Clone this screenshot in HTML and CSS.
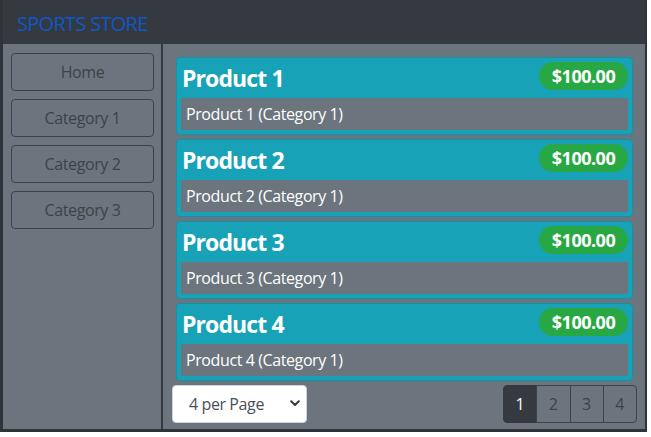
FILE: index.html
```html
<!DOCTYPE html>
<html lang="en">
<head>
<meta charset="utf-8">
<title>Sports Store</title>
<link rel="stylesheet" href="styles.css">
</head>
<body>
<div class="window">
  <header class="navbar">
    <span class="brand">SPORTS STORE</span>
  </header>
  <div class="layout">
    <aside class="sidebar">
      <button class="cat-btn">Home</button>
      <button class="cat-btn">Category 1</button>
      <button class="cat-btn">Category 2</button>
      <button class="cat-btn">Category 3</button>
    </aside>
    <main class="main">
      <div class="products">
        <div class="card">
          <div class="card-head"><h4 class="title">Product 1</h4><span class="price">$100.00</span></div>
          <div class="desc">Product 1 (Category 1)</div>
        </div>
        <div class="card">
          <div class="card-head"><h4 class="title">Product 2</h4><span class="price">$100.00</span></div>
          <div class="desc">Product 2 (Category 1)</div>
        </div>
        <div class="card">
          <div class="card-head"><h4 class="title">Product 3</h4><span class="price">$100.00</span></div>
          <div class="desc">Product 3 (Category 1)</div>
        </div>
        <div class="card">
          <div class="card-head"><h4 class="title">Product 4</h4><span class="price">$100.00</span></div>
          <div class="desc">Product 4 (Category 1)</div>
        </div>
      </div>
      <div class="footer">
        <div class="select-wrap">
          <select class="page-size">
            <option>4 per Page</option>
            <option>8 per Page</option>
            <option>12 per Page</option>
          </select>
          <svg class="chevron" width="10" height="7" viewBox="0 0 10 7"><path d="M1.2 1.3 L5 5 L8.8 1.3" fill="none" stroke="#343a40" stroke-width="2" stroke-linecap="round" stroke-linejoin="round"/></svg>
        </div>
        <div class="pager">
          <button class="page active">1</button>
          <button class="page">2</button>
          <button class="page">3</button>
          <button class="page">4</button>
        </div>
      </div>
    </main>
  </div>
</div>
</body>
</html>
```
FILE: styles.css
```css
* { box-sizing: border-box; }
html, body { margin: 0; padding: 0; background: #ffffff; }
body {
  font-family: "Open Sans", "Noto Sans", sans-serif;
  font-size: 16px;
  letter-spacing: -0.4px;
}
.window {
  width: 647px;
  height: 432px;
  display: flex;
  flex-direction: column;
  background: #343a40;
  border-left: 3px solid #2f3439;
  border-right: 2px solid #2f3439;
  border-bottom: 3px solid #2f3439;
}
.navbar {
  height: 44px;
  display: flex;
  align-items: center;
  padding-left: 14px;
  background: #343a40;
}
.brand {
  color: #0f57c8;
  font-size: 20px;
  letter-spacing: -0.7px;
  margin-top: 3px;
}
.layout {
  flex: 1;
  display: flex;
  min-height: 0;
}
.sidebar {
  width: 160px;
  background: #6c757d;
  border-right: 2px solid #343a40;
  padding: 9px 7px 0 8px;
  display: flex;
  flex-direction: column;
  gap: 8px;
}
.cat-btn {
  height: 38px;
  width: 143px;
  background: transparent;
  border: 1px solid #3d4248;
  border-radius: 4px;
  color: #3d4248;
  font-family: inherit;
  font-size: 16px;
  letter-spacing: -0.4px;
  padding: 0;
}
.main {
  flex: 1;
  background: #6c757d;
  display: flex;
  flex-direction: column;
  padding: 13px 8px 0 9px;
}
.products {
  display: flex;
  flex-direction: column;
  gap: 4px;
  padding: 0 4px;
}
.card {
  height: 78px;
  background: #17a2b8;
  border: 1px solid #1393a7;
  border-radius: 4px;
  padding: 4px;
  display: flex;
  flex-direction: column;
}
.card-head {
  height: 36px;
  display: flex;
  align-items: flex-start;
  justify-content: space-between;
}
.title {
  margin: 0;
  color: #ffffff;
  font-size: 23px;
  font-weight: 700;
  line-height: 30px;
  letter-spacing: -0.9px;
  padding-left: 1px;
  margin-top: 1px;
}
.price {
  height: 28px;
  width: 89px;
  border-radius: 14px;
  background: #28a745;
  color: #ffffff;
  font-size: 18px;
  font-weight: 700;
  display: flex;
  align-items: center;
  justify-content: center;
  letter-spacing: -0.5px;
}
.desc {
  height: 32px;
  background: #6c757d;
  color: #ffffff;
  padding-left: 5px;
  line-height: 32px;
  font-size: 16px;
}
.footer {
  margin-top: 4px;
  display: flex;
  justify-content: space-between;
  align-items: flex-start;
}
.select-wrap {
  position: relative;
  width: 135px;
  height: 38px;
}
.page-size {
  appearance: none;
  -webkit-appearance: none;
  width: 100%;
  height: 100%;
  background: #ffffff;
  border: 1px solid #ced4da;
  border-radius: 4px;
  padding: 0 0 0 16px;
  color: #495057;
  font-family: inherit;
  font-size: 16px;
  letter-spacing: -0.4px;
}
.chevron {
  position: absolute;
  left: 118px;
  top: 15px;
  pointer-events: none;
}
.pager {
  display: flex;
  width: 134px;
  height: 38px;
}
.page {
  flex: 1;
  background: transparent;
  border: 1px solid #3d4248;
  margin-left: -1px;
  color: #3d4248;
  font-family: inherit;
  font-size: 16px;
  padding: 0;
}
.page:first-child { margin-left: 0; border-radius: 4px 0 0 4px; }
.page:last-child { border-radius: 0 4px 4px 0; }
.page.active { background: #343a40; border-color: #343a40; color: #ffffff; }
```
